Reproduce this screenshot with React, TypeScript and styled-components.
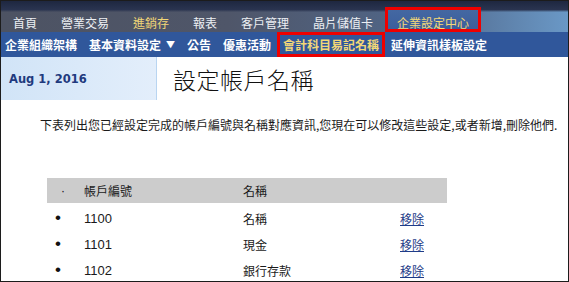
import React from 'react';
import styled, { createGlobalStyle } from 'styled-components';

const GlobalStyle = createGlobalStyle`
  html, body {
    margin: 0;
    padding: 0;
    background: #ffffff;
  }
  body {
    font-family: "Liberation Sans", "Noto Sans CJK TC", sans-serif;
  }
`;

const Frame = styled.div`
  width: 569px;
  height: 282px;
  box-sizing: border-box;
  border: 1px solid #1c1c1c;
  overflow: hidden;
  background: #ffffff;
`;

const TopBar = styled.div`
  display: flex;
  height: 31px;
  background:
    linear-gradient(180deg, #1e2740 0%, #2a3450 28%, rgba(60, 70, 90, 0) 36%),
    linear-gradient(90deg, #4d5363 0%, #4f5669 40%, #50678a 75%, #6a98c6 100%);
`;

const TopItem = styled.div<{ active?: boolean; highlight?: boolean }>`
  display: flex;
  align-items: flex-end;
  padding: 0 12px 2px;
  margin-top: ${({ active }) => (active ? '6px' : '0')};
  font-family: "Noto Sans CJK TC", sans-serif;
  font-size: 12px;
  line-height: 14px;
  color: ${({ highlight }) => (highlight ? '#f3d877' : '#eceff3')};
  background: ${({ active }) =>
    active ? 'linear-gradient(180deg, #4569a3 0%, #3a5d9b 100%)' : 'transparent'};
  outline: ${({ active }) => (active ? '3px solid #ee0000' : 'none')};
  outline-offset: -3px;
  white-space: nowrap;
`;

const SubBar = styled.div`
  display: flex;
  align-items: stretch;
  height: 25px;
  background: #30579b;
`;

const SubItem = styled.div<{ current?: boolean }>`
  display: flex;
  align-items: center;
  padding: 0 6px;
  font-family: "Noto Sans CJK TC", sans-serif;
  font-size: 12px;
  font-weight: 700;
  color: ${({ current }) => (current ? '#f3d877' : '#ffffff')};
  outline: ${({ current }) => (current ? '3px solid #ee0000' : 'none')};
  outline-offset: -3px;
  white-space: nowrap;

  &:first-child {
    padding-left: 4px;
  }
`;

const Caret = styled.span`
  font-size: 9px;
  margin-left: 5px;
`;

const HeadRow = styled.div`
  display: flex;
  height: 43px;
`;

const DatePanel = styled.div`
  width: 147px;
  padding-left: 8px;
  display: flex;
  align-items: center;
  background: linear-gradient(90deg, #d1e4f7 0%, #e3eefb 100%);
  border-right: 1px solid #b9d5f1;
  font-family: "DejaVu Sans", Verdana, sans-serif;
  font-size: 11.5px;
  font-weight: 700;
  color: #1f3a7e;
`;

const Title = styled.h1`
  margin: 0;
  padding-left: 16px;
  display: flex;
  align-items: center;
  font-family: "Noto Sans CJK TC", sans-serif;
  font-size: 23px;
  font-weight: 300;
  color: #111111;
  letter-spacing: 0.5px;
`;

const Intro = styled.p`
  margin: 17px 0 0 39px;
  font-family: "Noto Sans CJK TC", sans-serif;
  font-size: 12px;
  line-height: 16px;
  color: #1a1a1a;
  white-space: nowrap;
`;

const Table = styled.div`
  margin: 45px 0 0 46px;
  width: 400px;
`;

const Row = styled.div<{ head?: boolean }>`
  display: grid;
  grid-template-columns: 37px 159px 157px 47px;
  align-items: center;
  height: ${({ head }) => (head ? '25px' : '26px')};
  margin-bottom: ${({ head }) => (head ? '2px' : '0')};
  background: ${({ head }) => (head ? '#cccccc' : 'transparent')};
  font-family: "Noto Sans CJK TC", sans-serif;
  font-size: 12px;
  color: #1a1a1a;
`;

const Bullet = styled.span<{ head?: boolean }>`
  padding-left: ${({ head }) => (head ? '14px' : '8px')};
  font-family: "Liberation Sans", sans-serif;
  font-size: ${({ head }) => (head ? '12px' : '17px')};
  line-height: 12px;
  color: #111111;
`;

const Num = styled.span`
  font-family: "Liberation Sans", sans-serif;
  font-size: 13px;
`;

const RemoveLink = styled.a`
  color: #1f3c88;
  text-decoration: underline;
  cursor: pointer;
`;

const topMenu = ['首頁', '營業交易', '進銷存', '報表', '客戶管理', '晶片儲值卡'];

const accounts = [
  { id: '1100', name: '名稱' },
  { id: '1101', name: '現金' },
  { id: '1102', name: '銀行存款' },
];

const App: React.FC = () => {
  return (
    <Frame>
      <GlobalStyle />
      <TopBar>
        {topMenu.map((item) => (
          <TopItem key={item} highlight={item === '進銷存'}>
            {item}
          </TopItem>
        ))}
        <TopItem active highlight>
          企業設定中心
        </TopItem>
      </TopBar>
      <SubBar>
        <SubItem>企業組織架構</SubItem>
        <SubItem>
          基本資料設定<Caret>▼</Caret>
        </SubItem>
        <SubItem>公告</SubItem>
        <SubItem>優惠活動</SubItem>
        <SubItem current>會計科目易記名稱</SubItem>
        <SubItem>延伸資訊樣板設定</SubItem>
      </SubBar>
      <HeadRow>
        <DatePanel>Aug 1, 2016</DatePanel>
        <Title>設定帳戶名稱</Title>
      </HeadRow>
      <Intro>
        下表列出您已經設定完成的帳戶編號與名稱對應資訊,您現在可以修改這些設定,或者新增,刪除他們.
      </Intro>
      <Table>
        <Row head>
          <Bullet head>·</Bullet>
          <span>帳戶編號</span>
          <span>名稱</span>
          <span />
        </Row>
        {accounts.map((acc) => (
          <Row key={acc.id}>
            <Bullet>•</Bullet>
            <Num>{acc.id}</Num>
            <span>{acc.name}</span>
            <span>
              <RemoveLink>移除</RemoveLink>
            </span>
          </Row>
        ))}
      </Table>
    </Frame>
  );
};

export default App;
